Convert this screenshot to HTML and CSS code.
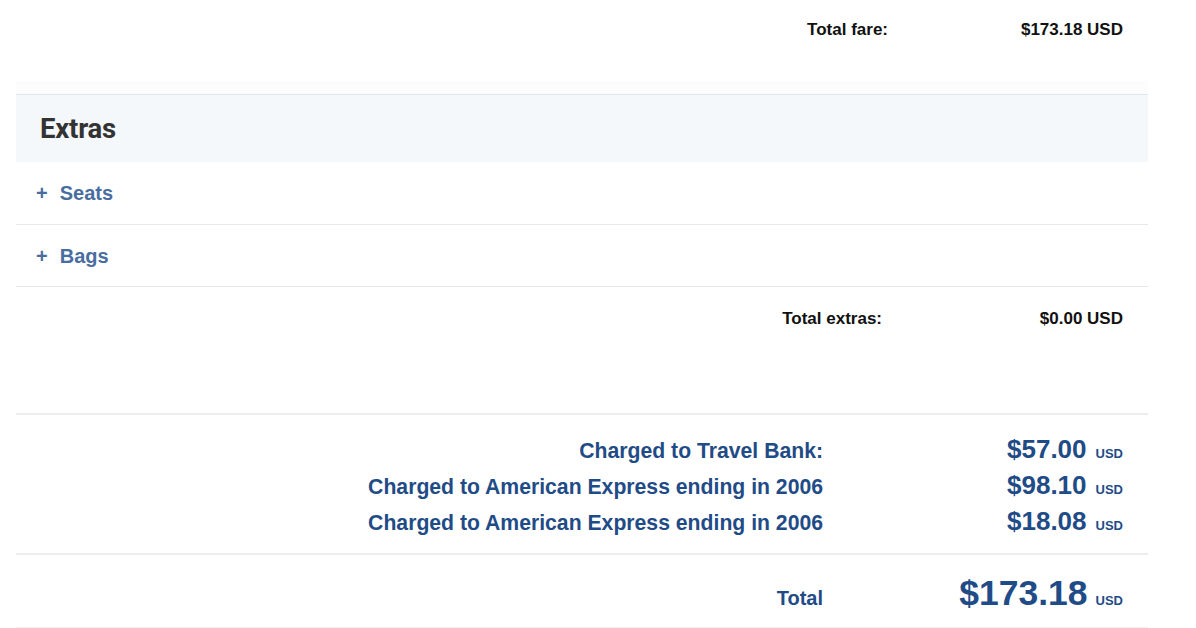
FILE: index.html
```html
<!DOCTYPE html>
<html>
<head>
<meta charset="utf-8">
<link rel="stylesheet" href="styles.css">
</head>
<body>
<div class="page">
  <div class="sum-row sum-row--fare">
    <span class="sum-label">Total fare:</span>
    <span class="sum-value">$173.18 USD</span>
  </div>
  <div class="fade"></div>
  <div class="extras-head">Extras</div>
  <div class="extra-item"><span class="plus">+</span><span class="extra-name">Seats</span></div>
  <div class="extra-item"><span class="plus">+</span><span class="extra-name">Bags</span></div>
  <div class="sum-row sum-row--extras">
    <span class="sum-label">Total extras:</span>
    <span class="sum-value">$0.00 USD</span>
  </div>
  <div class="charges">
    <div class="charge-row">
      <span class="charge-label">Charged to Travel Bank:</span>
      <span class="charge-amount">$57.00<span class="cur">USD</span></span>
    </div>
    <div class="charge-row">
      <span class="charge-label">Charged to American Express ending in 2006</span>
      <span class="charge-amount">$98.10<span class="cur">USD</span></span>
    </div>
    <div class="charge-row">
      <span class="charge-label">Charged to American Express ending in 2006</span>
      <span class="charge-amount">$18.08<span class="cur">USD</span></span>
    </div>
  </div>
  <div class="total-row">
    <span class="total-label">Total</span>
    <span class="total-amount">$173.18<span class="cur">USD</span></span>
  </div>
</div>
</body>
</html>
```

FILE: styles.css
```css
* { box-sizing: border-box; }
html, body { margin: 0; padding: 0; background: #ffffff; }
body { font-family: "Liberation Sans", Arial, sans-serif; }

.page {
  width: 1132px;
  margin-left: 16px;
}

.sum-row {
  display: grid;
  padding-right: 25px;
  font-size: 17px;
  font-weight: 700;
  line-height: 20px;
  color: #111111;
}
.sum-row--fare {
  grid-template-columns: 1fr 235px;
  padding-top: 20px;
  height: 81px;
}
.sum-row--extras {
  grid-template-columns: 1fr 241px;
  padding-top: 22px;
  height: 128px;
  border-bottom: 2px solid #ececec;
}
.sum-label { text-align: right; }
.sum-value { text-align: right; }

.fade {
  height: 13px;
  background: #fcfcfc;
}

.extras-head {
  height: 68px;
  border-top: 1px solid #dde7ee;
  background: #f4f8fb;
  padding-left: 24px;
  padding-bottom: 1px;
  display: flex;
  align-items: center;
  font-family: Roboto, "Liberation Sans", sans-serif;
  font-weight: 700;
  font-size: 27.5px;
  letter-spacing: -0.2px;
  color: #333333;
}

.extra-item {
  height: 62.5px;
  border-bottom: 1px solid #e8e8e8;
  display: flex;
  align-items: center;
  padding-left: 20px;
  padding-top: 2px;
  color: #4a6d9f;
  font-weight: 700;
  font-size: 20px;
}
.plus {
  font-weight: 700;
  font-size: 20px;
  margin-right: 12px;
}

.charges {
  padding: 16px 25px 14px 0;
  border-bottom: 2px solid #ececec;
}
.charge-row {
  display: grid;
  grid-template-columns: 1fr 300px;
  align-items: baseline;
  height: 36px;
  line-height: 36px;
  color: #1f4b87;
  font-weight: 700;
}
.charge-label {
  font-size: 21.2px;
  text-align: right;
}
.charge-amount {
  font-size: 26px;
  text-align: right;
}
.cur {
  font-size: 13px;
  margin-left: 9px;
}

.total-row {
  display: grid;
  grid-template-columns: 1fr 300px;
  align-items: baseline;
  padding: 16px 25px 0 0;
  height: 74px;
  line-height: 44px;
  color: #1f4b87;
  font-weight: 700;
  border-bottom: 2px solid #f0f0f0;
}
.total-label {
  font-size: 20px;
  text-align: right;
}
.total-amount {
  font-size: 35.5px;
  text-align: right;
}
.total-amount .cur {
  margin-left: 8px;
}
```
